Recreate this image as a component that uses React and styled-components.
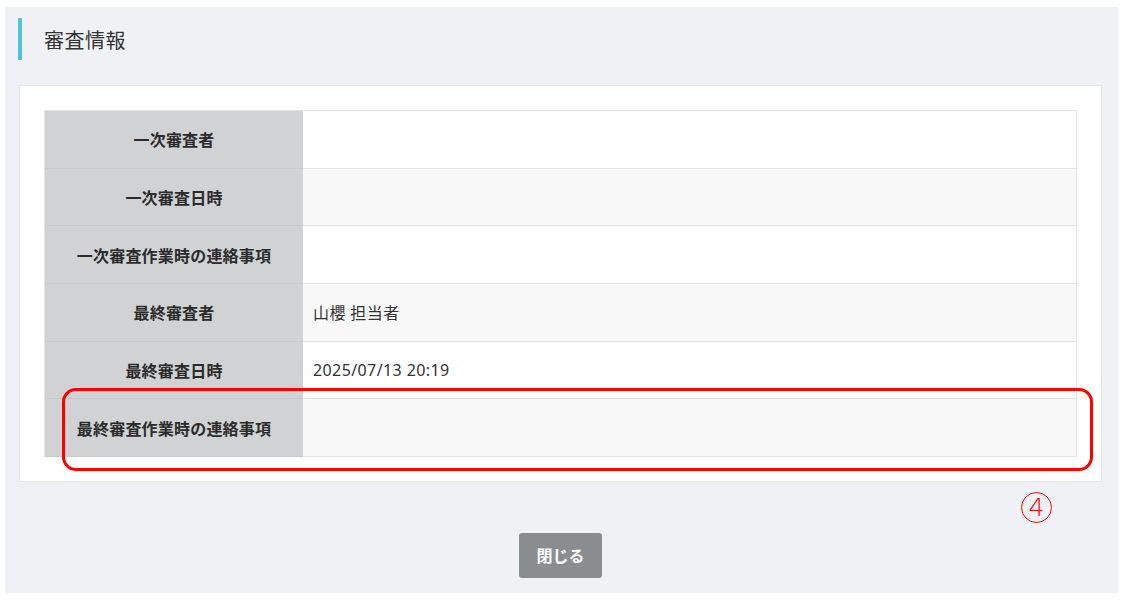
import React from 'react';
import styled, { createGlobalStyle } from 'styled-components';

const GlobalStyle = createGlobalStyle`
  body {
    margin: 0;
    background: #ffffff;
    font-family: "Noto Sans", "Noto Sans CJK JP", sans-serif;
    color: #333333;
  }
`

const Panel = styled.div`
  position: relative;
  margin: 7px 0 0 5px;
  width: 1113px;
  height: 586px;
  background-color: #f0f1f5;
  box-sizing: border-box;
  padding-top: 11px;
  display: flex;
  flex-direction: column;
`

const SectionHeader = styled.div`
  display: flex;
  align-items: center;
  height: 42px;
  margin-left: 13px;
  padding-left: 22px;
  border-left: 4px solid #4ec3df;
  font-size: 20px;
  color: #333;
  letter-spacing: 0.5px;
`

const Card = styled.div`
  margin: 25px 16px 0 14px;
  background-color: white;
  border: 1px solid #e4e5e8;
  padding: 24px;
`

const Table = styled.div`
  display: grid;
  grid-template-columns: 258px 1fr;
  border: 1px solid #e4e4e4;
  border-bottom: none;
`

const LabelCell = styled.div`
  height: 56.67px;
  display: flex;
  align-items: center;
  justify-content: center;
  background-color: #d1d2d4;
  border-bottom: 1px solid #c9cacc;
  font-size: 16px;
  font-weight: 700;
  color: #2b2b2b;
  letter-spacing: 0.2px;
`

const ValueCell = styled.div`
  height: 56.67px;
  display: flex;
  align-items: center;
  padding-left: 10px;
  background-color: ${p => (p.$striped ? '#f8f8f8' : '#ffffff')};
  border-bottom: 1px solid #e4e4e4;
  font-size: 16px;
  letter-spacing: 0.4px;
  color: #333;
`

const Footer = styled.div`
  display: flex;
  justify-content: center;
  margin-top: 51px;
  padding-right: 2px;
`

const CloseButton = styled.button`
  width: 83px;
  height: 45px;
  border: none;
  border-radius: 3px;
  background-color: #8a8d90;
  color: white;
  font-family: inherit;
  font-size: 16px;
  font-weight: 700;
`

const Highlight = styled.div`
  position: absolute;
  left: 57px;
  top: 381px;
  width: 1031px;
  height: 83px;
  box-sizing: border-box;
  border: 3.5px solid #ff0000;
  border-radius: 14px;
  pointer-events: none;
`

const Marker = styled.div`
  position: absolute;
  left: 1016px;
  top: 485px;
  width: 31px;
  height: 31px;
  box-sizing: border-box;
  border: 1.2px solid #ff0000;
  border-radius: 50%;
  color: #ff0000;
  font-family: "DejaVu Sans", sans-serif;
  font-weight: 200;
  font-size: 25px;
  line-height: 29px;
  text-align: center;
`

const rows = [
  { label: '一次審査者', value: '' },
  { label: '一次審査日時', value: '' },
  { label: '一次審査作業時の連絡事項', value: '' },
  { label: '最終審査者', value: '山櫻 担当者' },
  { label: '最終審査日時', value: '2025/07/13 20:19' },
  { label: '最終審査作業時の連絡事項', value: '' },
]

function App() {
  return (
    <>
      <GlobalStyle />
      <Panel>
        <SectionHeader>審査情報</SectionHeader>
        <Card>
          <Table>
            {rows.map((row, i) => (
              <React.Fragment key={row.label}>
                <LabelCell>{row.label}</LabelCell>
                <ValueCell $striped={i % 2 === 1}>{row.value}</ValueCell>
              </React.Fragment>
            ))}
          </Table>
        </Card>
        <Footer>
          <CloseButton>閉じる</CloseButton>
        </Footer>
        <Highlight />
        <Marker>4</Marker>
      </Panel>
    </>
  );
}

export default App;
